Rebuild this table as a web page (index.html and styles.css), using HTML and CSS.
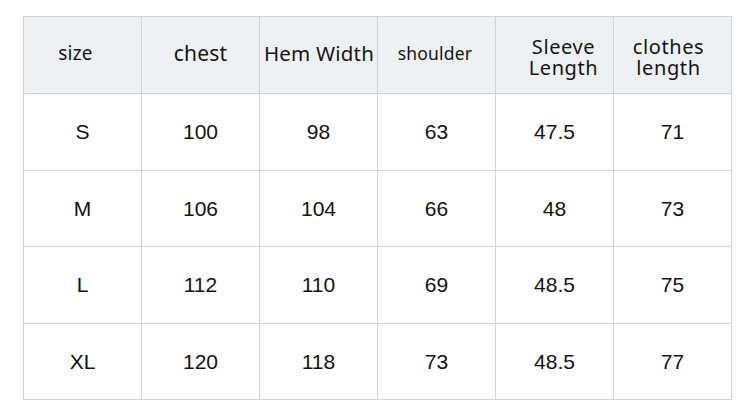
FILE: index.html
```html
<!DOCTYPE html>
<html>
<head>
<meta charset="utf-8">
<link rel="stylesheet" href="styles.css">
</head>
<body>
<div class="page">
  <div class="grid">
    <div class="cell head h-size">size</div>
    <div class="cell head h-chest">chest</div>
    <div class="cell head h-hem">Hem Width</div>
    <div class="cell head h-shoulder">shoulder</div>
    <div class="cell head h-sleeve two"><span class="ln">Sleeve</span><span class="ln">Length</span></div>
    <div class="cell head h-clothes two"><span class="ln">clothes</span><span class="ln">length</span></div>

    <div class="cell">S</div><div class="cell">100</div><div class="cell">98</div><div class="cell">63</div><div class="cell">47.5</div><div class="cell">71</div>
    <div class="cell">M</div><div class="cell">106</div><div class="cell">104</div><div class="cell">66</div><div class="cell">48</div><div class="cell">73</div>
    <div class="cell">L</div><div class="cell">112</div><div class="cell">110</div><div class="cell">69</div><div class="cell">48.5</div><div class="cell">75</div>
    <div class="cell">XL</div><div class="cell">120</div><div class="cell">118</div><div class="cell">73</div><div class="cell">48.5</div><div class="cell">77</div>
  </div>
</div>
</body>
</html>
```

FILE: styles.css
```css
html, body {
  margin: 0;
  padding: 0;
  background: #ffffff;
}
.page {
  padding: 16px 0 0 23px;
}
.grid {
  display: grid;
  grid-template-columns: repeat(6, 117px);
  grid-template-rows: 76px 76px 75px 76px 75px;
  gap: 1px;
  width: max-content;
  border: 1px solid #d3d3d3;
  background: #d3d3d3;
}
.cell {
  background: #ffffff;
  display: flex;
  align-items: center;
  justify-content: center;
  text-align: center;
  font-family: "Liberation Sans", Arial, sans-serif;
  font-size: 21px;
  color: #121212;
}
.head {
  background: #eef1f4;
  font-family: "Noto Sans", sans-serif;
  font-size: 21px;
  color: #141414;
  letter-spacing: 0.2px;
}
.two {
  flex-direction: column;
  font-size: 20px;
  line-height: 21px;
  padding-top: 4px;
}
.ln {
  display: block;
  height: 21px;
}
.h-size {
  font-size: 19px;
  padding-right: 14px;
  padding-bottom: 4px;
}
.h-chest {
  padding-bottom: 4px;
}
.h-hem {
  padding-bottom: 4px;
  padding-left: 1px;
  font-size: 20.5px;
}
.h-shoulder {
  font-size: 17.5px;
  padding-right: 3px;
  padding-bottom: 4px;
}
.h-sleeve {
  padding-left: 18px;
  letter-spacing: 0.6px;
}
.h-clothes {
  padding-right: 8px;
  letter-spacing: 0.6px;
}
```
